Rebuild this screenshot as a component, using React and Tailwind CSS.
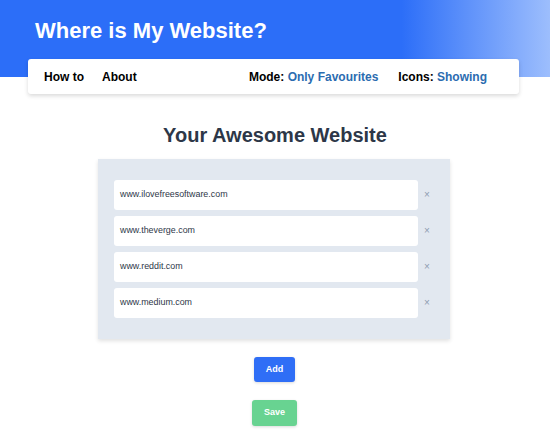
import React from 'react';

const sites = ['www.ilovefreesoftware.com', 'www.theverge.com', 'www.reddit.com', 'www.medium.com'];

export default function App() {
  return (
    <div className="w-[550px] h-[436px] bg-white overflow-hidden font-['Liberation_Sans',Arial,sans-serif]">
      <header className="h-[77px] bg-[linear-gradient(90deg,#2c6ef8_0%,#2c6ef8_73%,#9dbefd_100%)] pl-[35px] pt-[20px]">
        <h1 className="text-[22px] leading-none font-bold text-white">Where is My Website?</h1>
      </header>

      <nav className="ml-[28px] w-[491px] h-[35px] -mt-[18px] bg-white rounded-[3px] shadow-[0_2px_4px_rgba(0,0,0,0.15)] flex items-center justify-between pl-[16px] pr-[32px] text-[12px] font-bold text-black relative">
        <div className="flex gap-[18px]">
          <span>How to</span>
          <span>About</span>
        </div>
        <div className="flex gap-[20px]">
          <span>
            Mode: <span className="text-[#2b6cb0]">Only Favourites</span>
          </span>
          <span>
            Icons: <span className="text-[#2b6cb0]">Showing</span>
          </span>
        </div>
      </nav>

      <h2 className="mt-[27px] text-center text-[20px] leading-[28px] font-bold text-[#2d3748]">Your Awesome Website</h2>

      <div className="ml-[98px] mt-[10px] w-[352px] bg-[#e2e8f0] shadow-[0_2px_4px_rgba(0,0,0,0.12)] pl-[16px] py-[21px] flex flex-col gap-[6px]">
        {sites.map((s) => (
          <div key={s} className="flex items-center">
            <div className="w-[304px] h-[30px] bg-white rounded-[3px] flex items-center pl-[6px] text-[8.9px] text-[#2d3748]">
              {s}
            </div>
            <span className="ml-[6px] text-[10px] text-[#8f9cb0] leading-none">×</span>
          </div>
        ))}
      </div>

      <div className="flex flex-col items-center mt-[18px] gap-[18px] pr-[1px]">
        <button className="w-[41px] h-[25px] rounded-[3px] bg-[#2f6ef6] text-white text-[9px] font-bold shadow-[0_1px_3px_rgba(0,0,0,0.15)]">
          Add
        </button>
        <button className="w-[45px] h-[26px] rounded-[3px] bg-[#68d391] text-white text-[9px] font-bold shadow-[0_1px_3px_rgba(0,0,0,0.15)]">
          Save
        </button>
      </div>
    </div>
  );
}
